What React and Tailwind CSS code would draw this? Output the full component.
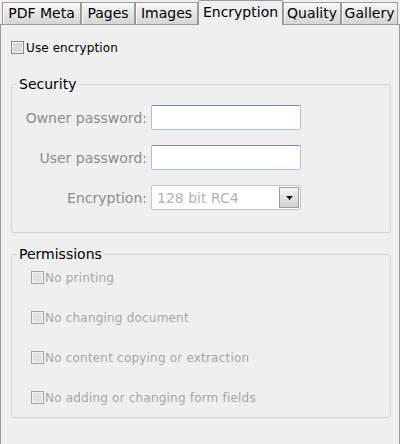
import React from 'react';

const tabs = [
    { label: 'PDF Meta', w: 'w-[79px]' },
    { label: 'Pages', w: 'w-[54px]' },
    { label: 'Images', w: 'w-[63px]' },
    { label: 'Encryption', w: 'w-[85px]', active: true },
    { label: 'Quality', w: 'w-[58px]' },
    { label: 'Gallery', w: 'w-[57px]' },
];

const permissions = [
    'No printing',
    'No changing document',
    'No content copying or extraction',
    'No adding or changing form fields',
];

function Checkbox({ disabled }) {
    return (
        <span
            className={
                disabled
                    ? 'block w-[13px] h-[13px] shrink-0 border border-[#a2a2a2] bg-[#e2e2e2] shadow-[inset_0_0_0_1px_#f3f3f3]'
                    : 'block w-[13px] h-[13px] shrink-0 border border-[#8a8a8a] bg-[#dadada] shadow-[inset_0_0_0_1px_#f5f5f5]'
            }
        />
    );
}

function Field({ label, children }) {
    return (
        <div className="flex items-center h-[25px]">
            <div className="w-[135px] text-right text-[#8c8c8c] leading-[16px]">{label}</div>
            <div className="ml-[4px]">{children}</div>
        </div>
    );
}

function TextInput() {
    return (
        <div className="w-[150px] h-[25px] bg-white rounded-[2px] border border-[#a9c2d8] border-t-[#6f90b2]" />
    );
}

export default function App() {
    return (
        <div className="w-[400px] h-[444px] bg-[#efefef] font-['DejaVu_Sans',sans-serif] text-[14px] leading-[16px] text-black flex flex-col overflow-hidden">
            {/* tab strip */}
            <div className="flex items-end h-[25px] pl-[2px] border-b border-[#9a9a9a] shrink-0">
                {tabs.map((t) =>
                    t.active ? (
                        <div
                            key={t.label}
                            className={`${t.w} h-[25px] -mb-px relative z-10 bg-[#efefef] border-t border-x border-[#9a9a9a] rounded-t-[2px] pt-[3px] text-center`}
                        >
                            {t.label}
                        </div>
                    ) : (
                        <div
                            key={t.label}
                            className={`${t.w} h-[22px] border-t border-x border-[#9a9a9a] bg-gradient-to-b from-[#f7f7f7] to-[#d5d5d5] shadow-[inset_1px_1px_0_#fbfbfb] pt-[2px] text-center`}
                        >
                            {t.label}
                        </div>
                    )
                )}
            </div>

            {/* panel body */}
            <div className="flex-1 border-x border-[#9a9a9a] px-[10px]">
                <label className="flex items-start h-[14px] mt-[16px] text-[12px] leading-[14px] tracking-[0.1px]">
                    <Checkbox />
                    <span className="ml-[2px]">Use encryption</span>
                </label>

                <fieldset className="mt-[21px] w-[380px] border border-[#cad4de] rounded-[3px] pb-[22px]">
                    <legend className="ml-[5px] px-[2px] leading-[16px]">Security</legend>
                    <div className="flex flex-col gap-[15px] mt-[13px]">
                        <Field label="Owner password:">
                            <TextInput />
                        </Field>
                        <Field label="User password:">
                            <TextInput />
                        </Field>
                        <Field label="Encryption:">
                            <div className="w-[150px] h-[25px] bg-white rounded-[2px] border border-[#bcc8d6] flex items-center pl-[5px] pr-[1px]">
                                <span className="flex-1 text-[#b2b2b2]">128 bit RC4</span>
                                <span className="w-[20px] h-[21px] border border-[#9c9c9c] bg-gradient-to-b from-[#f6f6f6] to-[#cfcfcf] flex items-center justify-center">
                                    <svg width="7" height="4" viewBox="0 0 7 4">
                                        <path d="M0 0h7L3.5 3.5z" fill="#000" />
                                        <rect x="3" y="3" width="1" height="1" fill="#000" />
                                    </svg>
                                </span>
                            </div>
                        </Field>
                    </div>
                </fieldset>

                <fieldset className="mt-[13px] w-[380px] border border-[#cad4de] rounded-[3px] pb-[12px]">
                    <legend className="ml-[5px] px-[2px] leading-[16px]">Permissions</legend>
                    <div className="flex flex-col gap-[26px] mt-[9px] pl-[19px] text-[12px] leading-[14px] tracking-[0.2px]">
                        {permissions.map((p) => (
                            <div key={p} className="flex items-start h-[14px]">
                                <Checkbox disabled />
                                <span className="ml-px text-[#a6a6a6]">{p}</span>
                            </div>
                        ))}
                    </div>
                </fieldset>
            </div>
        </div>
    );
}
